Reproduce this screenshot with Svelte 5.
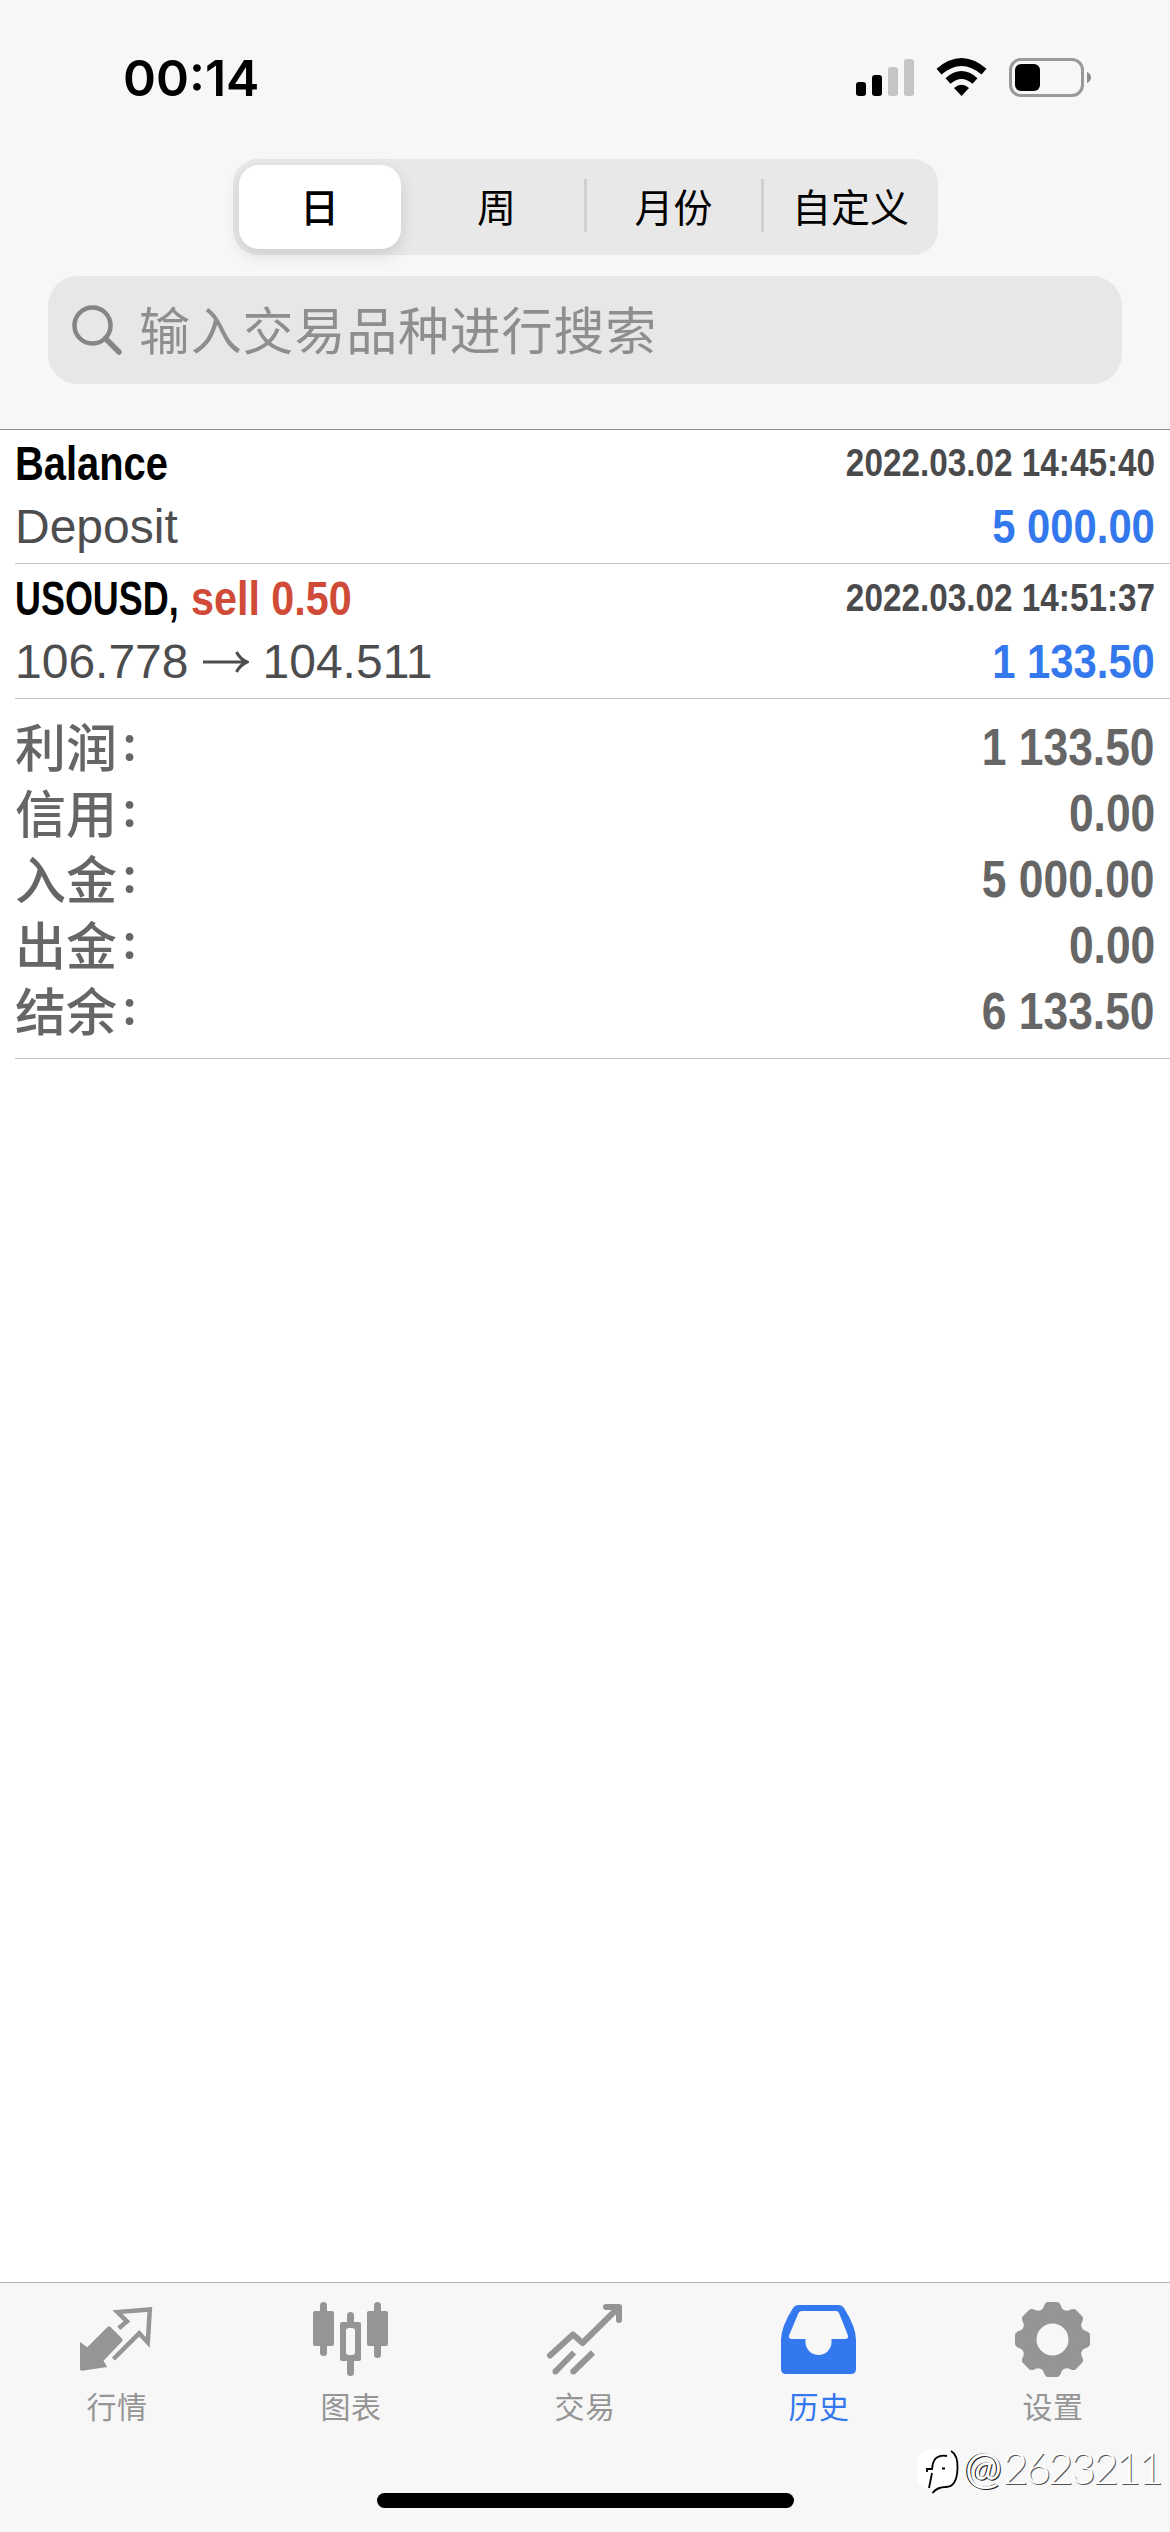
<script>
	let active = '日'
	let activeTab = '历史'
	const periods = ['日', '周', '月份', '自定义']

	const deals = [
		{ title: 'Balance', side: '', time: '2022.03.02 14:45:40', from: 'Deposit', to: '', amount: '5 000.00' },
		{ title: 'USOUSD,', side: 'sell 0.50', time: '2022.03.02 14:51:37', from: '106.778', to: '104.511', amount: '1 133.50' }
	]

	const totals = [
		{ label: '利润', value: '1 133.50' },
		{ label: '信用', value: '0.00' },
		{ label: '入金', value: '5 000.00' },
		{ label: '出金', value: '0.00' },
		{ label: '结余', value: '6 133.50' }
	]

	const tabs = ['行情', '图表', '交易', '历史', '设置']
	const teeth = [0, 45, 90, 135, 180, 225, 270, 315]
</script>

<main>
	<header>
		<div class="status">
			<span class="clock">00:14</span>
			<svg class="status-icons" width="236" height="40" viewBox="0 0 236 40">
				<rect x="0" y="24" width="10" height="14" rx="3" />
				<rect x="16" y="17" width="10" height="21" rx="3" />
				<rect x="32" y="9" width="10" height="29" rx="3" fill="#c5c5c5" />
				<rect x="48" y="1" width="10" height="37" rx="3" fill="#c5c5c5" />
				<g fill="none" stroke="#000" stroke-width="7.5">
					<path d="M83 13.7Q105.500 -5.700 128 13.700" />
					<path d="M92 23Q105.500 11 119 23" />
				</g>
				<path d="M98 30Q105.500 23.500 113 30L105.500 38Z" />
				<rect x="154.500" y="1.500" width="72" height="36" rx="10.500" fill="none" stroke="#999" stroke-width="3" />
				<rect x="159" y="6" width="25" height="27" rx="6" />
				<path d="M231 14Q235 16 235 19.500T231 25Z" fill="#8c8c8c" />
			</svg>
		</div>
		<nav class="periods">
			{#each periods as period}
				<button class="period" class:selected={period === active} on:click={() => active = period}>{period}</button>
			{/each}
		</nav>
		<div class="search">
			<svg width="52" height="52" viewBox="0 0 52 52" fill="none" stroke="#858585" stroke-width="4.500" stroke-linecap="round">
				<circle cx="21.500" cy="21.500" r="18" />
				<path d="M34.500 34.500L48 48" stroke-width="5.500" />
			</svg>
			<span>输入交易品种进行搜索</span>
		</div>
	</header>

	<section class="deals">
		{#each deals as deal}
			<article class="deal">
				<div class="line">
					<span class="title">
						<span class="name" class:symbol={deal.side}>{deal.title}</span>
						{#if deal.side}
							<span class="side">{deal.side}</span>
						{/if}
					</span>
					<span class="time">{deal.time}</span>
				</div>
				<div class="line">
					<span class="detail">
						{deal.from}
						{#if deal.to}
							<svg width="46" height="24" viewBox="0 0 46 24" fill="none" stroke="#4d4d4f" stroke-width="3">
								<path d="M0 12H44M33.500 2Q37 9 44 12Q37 15 33.500 22" />
							</svg>
							{deal.to}
						{/if}
					</span>
					<span class="amount">{deal.amount}</span>
				</div>
			</article>
		{/each}
	</section>

	<section class="totals">
		{#each totals as total}
			<div class="total">
				<span class="label">{total.label}<span class="colon">:</span></span>
				<span class="value">{total.value}</span>
			</div>
		{/each}
	</section>

	<footer>
		<nav class="tabs">
			{#each tabs as tab, i}
				<button class="tab" class:current={tab === activeTab} on:click={() => activeTab = tab}>
					<svg width="84" height="84" viewBox="0 0 84 84" fill="currentColor">
						{#if i === 0}
							<path d="M5 43L12.300 48.300L32.500 28Q34 26.500 35.500 28L47 39.500Q48.500 41 47 42.500L28.500 61.700L32.200 68L7 71.700Q5 71.700 5 70Z" />
							<path d="M43.800 29.300L52 22.300L42.500 13L74.800 10.500L72.800 43.500L64.200 34.300L38.500 60" fill="none" stroke="currentColor" stroke-width="4.500" />
						{:else if i === 1}
							<rect x="11" y="3" width="7" height="54" rx="3.500" />
							<rect x="4" y="12" width="21" height="35" rx="2" />
							<rect x="65" y="3" width="7" height="56" rx="3.500" />
							<rect x="58" y="12" width="21" height="35" rx="2" />
							<rect x="38" y="13" width="7" height="64" rx="3.500" />
							<rect x="31" y="23" width="21" height="39" rx="2" />
							<rect x="37" y="29" width="9" height="27" rx="3" fill="#f7f7f7" />
						{:else if i === 2}
							<g fill="none" stroke="currentColor" stroke-width="6" stroke-linecap="round" stroke-linejoin="round">
								<path d="M7 56.500L30 35.500L39.500 44L75 9M63 8H76V21" />
							</g>
							<g fill="none" stroke="currentColor" stroke-width="6">
								<path d="M12.500 72.500L31 53.500M30.300 72.500L50 53.500" />
								<path d="M12.500 72.500h.01M30.300 72.500h.01" stroke-linecap="round" />
							</g>
						{:else if i === 3}
							<path fill-rule="evenodd" d="M22 6H62Q65 6 67 9Q79 28 79 41V70Q79 75 74 75H9Q4 75 4 70V41Q4 28 16 9Q18 6 21 6ZM25 12Q22.500 12 21.500 14L12.200 36Q11 40 15 40H28.500V43A13 13 0 0 0 54.500 43V40H68Q72 40 70.800 36L62 14Q61 12 59 12Z" />
						{:else}
							<circle cx="41.500" cy="40.500" r="23" fill="none" stroke="currentColor" stroke-width="14" />
							{#each teeth as angle}
								<path d="M28 12Q32 11 33 7Q34.500 3 37 3H46Q48.500 3 50 7Q51 11 55 12L48 18H35Z" transform="rotate({angle} 41.500 40.500)" />
							{/each}
						{/if}
					</svg>
					<span>{tab}</span>
				</button>
			{/each}
		</nav>
		<div class="home-bar"></div>
		<div class="watermark">
			<svg width="44" height="50" viewBox="0 0 44 50">
				<rect width="41" height="40" rx="13" fill="#fff" />
				<path d="M34 3Q41 7 40.500 20Q40 39 29 39Q20 39 15.500 45" transform="translate(0 -1)" fill="none" stroke="#000" stroke-width="1.800" />
				<path d="M30 8Q17 6 15.500 18L15 21H10V24M25 20.500h3M15 25L12 40" transform="translate(0 -1)" fill="none" stroke="#000" stroke-width="1.800" />
			</svg>
			<span class="at">@</span>
			<span>2623211</span>
		</div>
	</footer>
</main>

<style>
	:global(body) {
		background: #fff;
	}

	main {
		display: flex;
		flex-direction: column;
		width: 1170px;
		height: 2532px;
		box-sizing: border-box;
		font-family: "Liberation Sans", "Noto Sans CJK SC", sans-serif;
		overflow: hidden;
	}

	button {
		border: 0;
		padding: 0;
		background: none;
		font-family: inherit;
	}

	svg {
		display: block;
		flex: none;
	}

	header {
		display: flex;
		flex-direction: column;
		align-items: center;
		box-sizing: border-box;
		height: 430px;
		background: #f7f7f7;
		border-bottom: 1px solid #8e8e8e;
	}

	.status {
		display: flex;
		justify-content: space-between;
		align-items: flex-start;
		box-sizing: border-box;
		width: 100%;
		height: 159px;
		padding: 58px 78px 0 123px;
	}

	.clock {
		font-family: Inter, sans-serif;
		font-size: 50px;
		font-weight: 600;
		line-height: 40px;
	}

	.periods {
		display: grid;
		grid-template-columns: 168px repeat(3, 1fr);
		box-sizing: border-box;
		width: 705px;
		height: 96px;
		padding: 6px 0 6px 6px;
		border-radius: 25px;
		background: #e8e8e8;
	}

	.period {
		display: flex;
		align-items: center;
		justify-content: center;
		box-sizing: border-box;
		height: 84px;
		padding: 0 0 4px 3px;
		font-size: 39px;
		color: #000;
	}

	.period:nth-child(n + 3) {
		padding-left: 0;
	}

	.period:nth-child(n + 3)::before {
		content: "";
		width: 3px;
		height: 53px;
		margin-right: auto;
		background: #d0d0d0;
	}

	.period:nth-child(n + 3)::after {
		content: "";
		margin-left: auto;
	}

	.selected {
		width: 162px;
		padding-left: 0;
		border-radius: 20px;
		background: #fff;
		box-shadow: 0 6px 16px rgba(0, 0, 0, 0.12);
		font-weight: 500;
	}

	.search {
		display: flex;
		align-items: center;
		gap: 16px;
		box-sizing: border-box;
		width: 1074px;
		height: 108px;
		margin-top: 21px;
		padding-left: 23px;
		border-radius: 30px;
		background: #e7e7e8;
		font-size: 51px;
		letter-spacing: 0.8px;
		color: #8e8e90;
	}

	.search span {
		padding-bottom: 4px;
	}

	.deal {
		display: flex;
		flex-direction: column;
		box-sizing: border-box;
		height: 135px;
		margin-left: 15px;
		padding: 3px 15px 0 0;
		border-bottom: 1px solid #c3c3c5;
	}

	.deal:first-child {
		height: 134px;
		padding-top: 2px;
	}

	.line {
		display: flex;
		justify-content: space-between;
		height: 63px;
		line-height: 63px;
		font-size: 48px;
		white-space: nowrap;
	}

	/* condensed face */
	.title,
	.time,
	.amount,
	.value {
		font-weight: bold;
		transform: scaleX(0.86);
	}

	.title {
		display: flex;
		transform-origin: left;
	}

	.name {
		transform: scaleX(0.965);
		transform-origin: left;
	}

	.symbol {
		margin-right: -14px;
		transform: scaleX(0.87);
	}

	.time,
	.amount,
	.value {
		transform-origin: right;
	}

	.side {
		color: #cf4b37;
	}

	.time {
		font-size: 39px;
		line-height: 61px;
		color: #4a4a4c;
		transform: scaleX(0.854);
	}

	.detail {
		display: flex;
		align-items: center;
		gap: 14px;
		color: #4d4d4f;
	}

	.amount,
	.value {
		transform: scaleX(0.87);
	}

	.amount {
		color: #3478ed;
	}

	.totals {
		margin-left: 15px;
		padding: 15px 15px 14px 0;
		border-bottom: 1px solid #c3c3c5;
	}

	.total {
		display: flex;
		justify-content: space-between;
		height: 66px;
		line-height: 66px;
		font-size: 51px;
		color: #666;
	}

	.value {
		padding-top: 1px;
	}

	.label {
		padding-top: 2px;
		font-weight: 500;
	}

	.colon {
		margin-left: 6px;
		font-family: Lato, sans-serif;
		font-weight: bold;
		line-height: 1;
		vertical-align: 6px;
	}

	footer {
		position: relative;
		display: flex;
		flex-direction: column;
		align-items: center;
		box-sizing: border-box;
		height: 250px;
		margin-top: auto;
		background: #f7f7f7;
		border-top: 1px solid #b2b2b2;
	}

	.tabs {
		display: grid;
		grid-template-columns: repeat(5, 1fr);
		width: 100%;
		height: 210px;
		padding-top: 16px;
		box-sizing: border-box;
	}

	.tab {
		display: flex;
		flex-direction: column;
		align-items: center;
		color: #959595;
		font-size: 30px;
		line-height: 50px;
		letter-spacing: 0.5px;
	}

	.current {
		color: #3478f0;
	}

	.home-bar {
		width: 417px;
		height: 15px;
		border-radius: 8px;
		background: #000;
	}

	.watermark {
		position: absolute;
		left: 917px;
		top: 166px;
		display: flex;
		gap: 4px;
		font-family: Lato, sans-serif;
		font-size: 44px;
		font-weight: 300;
		line-height: 36px;
		letter-spacing: -3px;
		color: #fff;
		text-shadow: 1px 1px 0 #555;
	}

	.at {
		font-weight: 400;
		text-shadow: -1px 0 0 #000, 1px 1px 0 #222;
	}
</style>
